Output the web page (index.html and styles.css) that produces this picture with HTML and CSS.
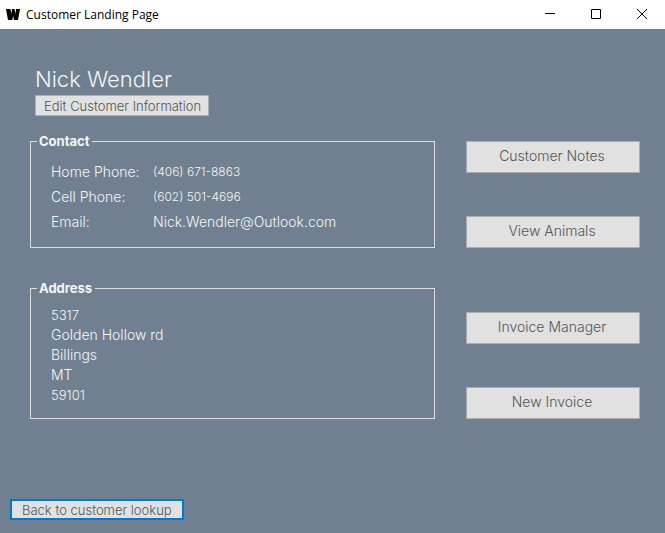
FILE: index.html
```html
<!DOCTYPE html>
<html lang="en">
<head>
<meta charset="utf-8">
<title>Customer Landing Page</title>
<link rel="stylesheet" href="styles.css">
</head>
<body>
<header class="titlebar">
  <svg class="app-icon" viewBox="0 0 14 12" aria-hidden="true"><path d="M0 0h4.500l.8 5L6 0h2.500l1 5 .5-5h4l-2 11H8L7.200 7 6.200 11H2z"/></svg>
  <span class="caption">Customer Landing Page</span>
  <button class="window-button" type="button" aria-label="Minimize"><svg viewBox="0 0 10 10" aria-hidden="true"><path d="M0 3.500h10"/></svg></button>
  <button class="window-button" type="button" aria-label="Maximize"><svg viewBox="0 0 10 10" aria-hidden="true"><path d="M.5-.5h9v9h-9z"/></svg></button>
  <button class="window-button" type="button" aria-label="Close"><svg viewBox="0 0 10 10" aria-hidden="true"><path d="M0-1l10 10M10-1L0 9"/></svg></button>
</header>
<main class="page">
  <div class="customer">
    <h1 class="name">Nick Wendler</h1>
    <button class="button small" type="button">Edit Customer Information</button>
  </div>
  <div class="columns">
    <fieldset class="group contact">
      <legend>Contact</legend>
      <dl class="details">
        <dt>Home Phone:</dt><dd class="phone">(406) 671-8863</dd>
        <dt>Cell Phone:</dt><dd class="phone">(602) 501-4696</dd>
        <dt>Email:</dt><dd>Nick.Wendler@Outlook.com</dd>
      </dl>
    </fieldset>
    <div class="actions">
      <button class="button" type="button">Customer Notes</button>
      <button class="button" type="button">View Animals</button>
    </div>
    <fieldset class="group">
      <legend>Address</legend>
      <address class="address">
        <span class="number">5317</span>
        <span>Golden Hollow rd</span>
        <span>Billings</span>
        <span>MT</span>
        <span class="number">59101</span>
      </address>
    </fieldset>
    <div class="actions">
      <button class="button" type="button">Invoice Manager</button>
      <button class="button" type="button">New Invoice</button>
    </div>
  </div>
  <button class="button small back" type="button">Back to customer lookup</button>
</main>
</body>
</html>
```

FILE: styles.css
```css
* {
  box-sizing: border-box;
}

body {
  margin: 0;
  min-height: 100vh;
  display: flex;
  flex-direction: column;
  background: #708090;
  color: #f5f5f5;
  font: 300 14px/20px "Century Gothic", Inter, sans-serif;
}

.titlebar {
  display: flex;
  align-items: center;
  height: 29px;
  padding-left: 6px;
  background: #fff;
  color: #000;
  font: 400 12px/16px "Segoe UI", "Open Sans", sans-serif;
}

.app-icon {
  width: 14px;
  height: 12px;
  margin-right: 6px;
}

.caption {
  flex: 1;
}

.window-button {
  display: grid;
  place-items: center;
  width: 46px;
  height: 27px;
  padding: 0;
  border: 0;
  background: none;
}

.window-button svg {
  width: 10px;
  height: 10px;
  overflow: visible;
  fill: none;
  stroke: #000;
}

.page {
  flex: 1;
  display: flex;
  flex-direction: column;
  padding: 38px 25px 13px 30px;
}

.customer {
  padding-left: 5px;
}

.name {
  margin: 0 0 3px;
  font-size: 22px;
  font-weight: 300;
  line-height: 25px;
}

.button {
  display: block;
  width: 174px;
  height: 32px;
  padding: 0 2px 2px 0;
  border: 1px solid #adadad;
  background: #e1e1e1;
  color: #555;
  font: inherit;
}

.small {
  height: 21px;
  padding: 0 8px;
  font-size: 13px;
  line-height: 18px;
  text-align: left;
  white-space: nowrap;
}

.columns {
  display: grid;
  grid-template-columns: 1fr 174px;
  gap: 33px 31px;
  margin-top: 18px;
}

.group {
  min-width: 0;
  margin: 0;
  padding: 9px 14px 13px 6px;
  border: 1px solid #dcdcdc;
}

.contact {
  padding-top: 10px;
}

.group legend {
  padding: 0 3px 0 2px;
  font-size: 13px;
  font-weight: 700;
  line-height: 15px;
}

.details {
  display: grid;
  grid-template-columns: 102px 1fr;
  margin: 0 0 0 14px;
  line-height: 25px;
}

.details dd {
  margin: 0;
}

.details .phone {
  font-size: 12px;
}

.address {
  display: grid;
  margin-left: 14px;
  font-style: normal;
}

.number {
  font-size: 13px;
}

.actions {
  display: flex;
  flex-direction: column;
  justify-content: flex-end;
  gap: 43px;
}

.back {
  margin: auto 0 0 -20px;
  padding: 0 10px;
  border: 2px solid #0078d7;
}
```
